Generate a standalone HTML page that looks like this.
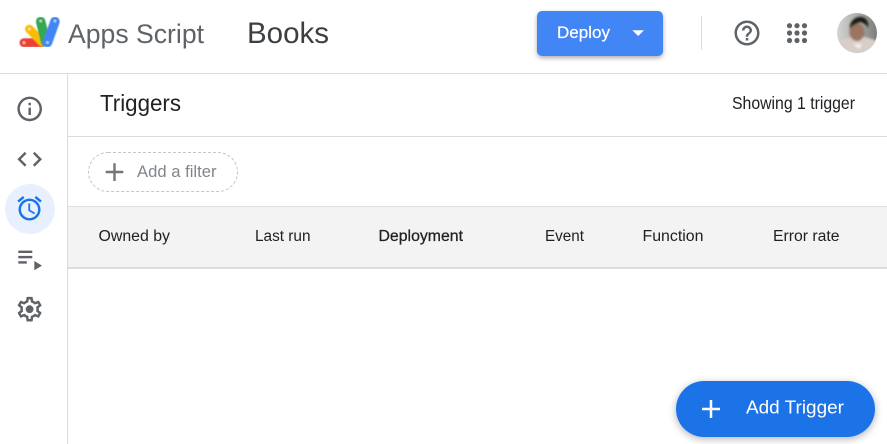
<!DOCTYPE html>
<html>
<head>
<meta charset="utf-8">
<style>
html,body{margin:0;padding:0;background:#fff;width:887px;height:444px;overflow:hidden}
svg{display:block}
text{font-family:"Liberation Sans",sans-serif}
</style>
</head>
<body>
<svg width="887" height="444" viewBox="0 0 887 444" xmlns="http://www.w3.org/2000/svg">
<defs>
<filter id="s1" x="-20%" y="-30%" width="140%" height="170%"><feDropShadow dx="0" dy="2" stdDeviation="2.5" flood-color="#000" flood-opacity=".33"/></filter>
<filter id="s2" x="-20%" y="-30%" width="140%" height="170%"><feDropShadow dx="0" dy="2" stdDeviation="4" flood-color="#000" flood-opacity=".3"/></filter>
<filter id="b1"><feGaussianBlur stdDeviation="1"/></filter>
<filter id="b2" x="-10%" y="-10%" width="120%" height="120%"><feGaussianBlur stdDeviation=".45"/></filter>
<clipPath id="av"><circle cx="857" cy="33" r="20"/></clipPath>
<linearGradient id="avg" x1="0" y1="0" x2="1" y2="0"><stop offset="0" stop-color="#d4d4d2"/><stop offset=".6" stop-color="#a5a5a3"/><stop offset="1" stop-color="#7c7c7c"/></linearGradient>
</defs>
<rect width="887" height="444" fill="#fff"/>

<!-- logo -->
<g stroke-linecap="round" fill="none" filter="url(#b2)">
<path d="M24 42.7H42" stroke="#ea4335" stroke-width="9"/>
<path d="M29.3 29L42 42" stroke="#fbbc04" stroke-width="8.5"/>
<path d="M40.7 21.5L45.5 42" stroke="#34a853" stroke-width="9.5"/>
<path d="M55 21.5L47.5 42.5" stroke="#4285f4" stroke-width="9.5"/>
<g fill="#fff" stroke="none" opacity=".65">
<circle cx="24" cy="42.7" r="1.4"/><circle cx="29.3" cy="29" r="1.4"/><circle cx="40.7" cy="21" r="1.4"/><circle cx="55" cy="21" r="1.4"/><circle cx="47.5" cy="42.5" r="1.4"/>
</g>
</g>
<text x="68" y="43" font-size="27" fill="#5f6368" textLength="136" lengthAdjust="spacingAndGlyphs">Apps Script</text>
<text x="247" y="43" font-size="29.5" fill="#3c4043" textLength="82" lengthAdjust="spacingAndGlyphs">Books</text>

<!-- deploy -->
<rect x="537" y="11" width="126" height="45" rx="5" fill="#4285f4" filter="url(#s1)"/>
<text x="557" y="38" font-size="16.5" fill="#fff" stroke="#fff" stroke-width=".2" textLength="53" lengthAdjust="spacingAndGlyphs">Deploy</text>
<path d="M632.3 30.3H644L638.2 36Z" fill="#fff"/>
<rect x="701" y="16" width="1" height="34" fill="#dadce0"/>

<!-- help -->
<path transform="translate(732 18) scale(1.25)" fill="#5f6368" d="M11 18h2v-2h-2v2zm1-16C6.48 2 2 6.48 2 12s4.48 10 10 10 10-4.48 10-10S17.52 2 12 2zm0 18c-4.41 0-8-3.59-8-8s3.59-8 8-8 8 3.59 8 8-3.59 8-8 8zm0-14c-2.21 0-4 1.79-4 4h2c0-1.1.9-2 2-2s2 .9 2 2c0 2-3 1.75-3 5h2c0-2.25 3-2.5 3-5 0-2.21-1.79-4-4-4z"/>

<!-- apps grid -->
<g fill="#5f6368">
<circle cx="789.5" cy="25.7" r="2.6"/><circle cx="797" cy="25.7" r="2.6"/><circle cx="804.5" cy="25.7" r="2.6"/>
<circle cx="789.5" cy="33" r="2.6"/><circle cx="797" cy="33" r="2.6"/><circle cx="804.5" cy="33" r="2.6"/>
<circle cx="789.5" cy="40.5" r="2.6"/><circle cx="797" cy="40.5" r="2.6"/><circle cx="804.5" cy="40.5" r="2.6"/>
</g>

<!-- avatar -->
<g clip-path="url(#av)">
<rect x="837" y="13" width="40" height="40" fill="url(#avg)"/>
<g filter="url(#b1)">
<path d="M836 54V42c6-3 12-4 16-5l12 0c4 1 10 2 14 5V54Z" fill="#d8cec8"/>
<ellipse cx="857" cy="32" rx="7.5" ry="9" fill="#9a7462"/>
<path d="M850 29c-1-8 6-13 12-12 5 1 7 6 6 11-1-3-4-5-8-6-3 2-8 3-10 7Z" fill="#1e1a18"/>
<path d="M853 44l9 0-3 5Z" fill="#f5f2ee"/>
</g>
</g>

<!-- layout lines -->
<rect x="0" y="73" width="887" height="1" fill="#dadce0"/>
<rect x="67" y="74" width="1" height="370" fill="#dadce0"/>
<rect x="68" y="136" width="819" height="1" fill="#dadce0"/>

<!-- sidebar: info -->
<path transform="translate(14.94 94.14) scale(1.23)" fill="#5f6368" d="M11 7h2v2h-2zm0 4h2v6h-2zm1-9C6.48 2 2 6.48 2 12s4.48 10 10 10 10-4.48 10-10S17.52 2 12 2zm0 18c-4.41 0-8-3.59-8-8s3.59-8 8-8 8 3.59 8 8-3.59 8-8 8z"/>
<!-- code -->
<path transform="translate(14.94 144.5) scale(1.23)" fill="#5f6368" d="M9.4 16.6L4.8 12l4.6-4.6L8 6l-6 6 6 6 1.4-1.4zm5.2 0l4.6-4.6-4.6-4.6L16 6l6 6-6 6-1.4-1.4z"/>
<!-- active -->
<circle cx="30" cy="209" r="25" fill="#e8f0fe"/>
<path transform="translate(14.9 193.7) scale(1.22)" fill="#1a73e8" d="M22 5.72l-4.6-3.86-1.29 1.53 4.6 3.86L22 5.72zM7.88 3.39L6.6 1.86 2 5.71l1.29 1.53 4.59-3.85zM12.5 8H11v6l4.75 2.85.75-1.23-4-2.37V8zM12 4c-4.97 0-9 4.03-9 9s4.03 9 9 9c4.97 0 9-4.03 9-9s-4.03-9-9-9zm0 16c-3.87 0-7-3.13-7-7s3.13-7 7-7 7 3.13 7 7-3.13 7-7 7z"/>
<!-- execution list -->
<rect x="18.3" y="250.6" width="14" height="2.4" fill="#5f6368"/>
<rect x="18.3" y="255.9" width="14" height="2.4" fill="#5f6368"/>
<rect x="18.3" y="261.2" width="8.5" height="2.4" fill="#5f6368"/>
<path d="M34.3 261V270.3L42 265.6Z" fill="#5f6368"/>
<!-- gear -->
<path transform="translate(14.84 294.4) scale(1.23)" fill="#5f6368" d="M19.43 12.98c.04-.32.07-.64.07-.98 0-.34-.03-.66-.07-.98l2.11-1.65c.19-.15.24-.42.12-.64l-2-3.46c-.09-.16-.26-.25-.44-.25-.06 0-.12.01-.17.03l-2.49 1c-.52-.4-1.08-.73-1.69-.98l-.38-2.65C14.46 2.18 14.25 2 14 2h-4c-.25 0-.46.18-.49.42l-.38 2.65c-.61.25-1.17.59-1.69.98l-2.49-1c-.06-.02-.12-.03-.18-.03-.17 0-.34.09-.43.25l-2 3.46c-.13.22-.07.49.12.64l2.11 1.65c-.04.32-.07.65-.07.98 0 .33.03.66.07.98l-2.11 1.65c-.19.15-.24.42-.12.64l2 3.46c.09.16.26.25.44.25.06 0 .12-.01.17-.03l2.49-1c.52.4 1.08.73 1.69.98l.38 2.65c.03.24.24.42.49.42h4c.25 0 .46-.18.49-.42l.38-2.65c.61-.25 1.17-.59 1.69-.98l2.49 1c.06.02.12.03.18.03.17 0 .34-.09.43-.25l2-3.46c.12-.22.07-.49-.12-.64l-2.11-1.65zm-1.98-1.71c.04.31.05.52.05.73 0 .21-.02.43-.05.73l-.14 1.13.89.7 1.08.84-.7 1.21-1.27-.51-1.04-.42-.9.68c-.43.32-.84.56-1.25.73l-1.06.43-.16 1.13-.2 1.35h-1.4l-.19-1.35-.16-1.13-1.06-.43c-.43-.18-.83-.41-1.23-.71l-.91-.7-1.06.43-1.27.51-.7-1.21 1.08-.84.89-.7-.14-1.13c-.03-.31-.05-.54-.05-.74s.02-.43.05-.73l.14-1.13-.89-.7-1.08-.84.7-1.21 1.27.51 1.04.42.9-.68c.43-.32.84-.56 1.25-.73l1.06-.43.16-1.13.2-1.35h1.39l.19 1.35.16 1.13 1.06.43c.43.18.83.41 1.23.71l.91.7 1.06-.43 1.27-.51.7 1.21-1.07.85-.89.7.14 1.13z"/>
<circle cx="29.6" cy="309.2" r="3.9" fill="#5f6368"/>

<!-- title row -->
<text x="100" y="111" font-size="23" fill="#202124" textLength="81" lengthAdjust="spacingAndGlyphs">Triggers</text>
<text x="732" y="109" font-size="17.5" fill="#202124" textLength="123" lengthAdjust="spacingAndGlyphs">Showing 1 trigger</text>

<!-- filter -->
<rect x="88.5" y="152.5" width="149" height="39" rx="19.5" fill="#fff" stroke="#c4c7ca" stroke-dasharray="3 2"/>
<path d="M105.7 172H123.3M114.5 163.3V181" stroke="#757575" stroke-width="2.4" fill="none"/>
<text x="137" y="177" font-size="16.5" fill="#80868b" textLength="79.5" lengthAdjust="spacingAndGlyphs">Add a filter</text>

<!-- table header -->
<rect x="68" y="206" width="819" height="62" fill="#f3f3f3"/>
<rect x="68" y="206" width="819" height="1" fill="#e0e0e0"/>
<rect x="68" y="267" width="819" height="2" fill="#dadce0"/>
<g font-size="15.5" fill="#202124">
<text x="98.5" y="241" textLength="71.5" lengthAdjust="spacingAndGlyphs">Owned by</text>
<text x="255" y="241" textLength="55.5" lengthAdjust="spacingAndGlyphs">Last run</text>
<text x="378.5" y="241" textLength="84.5" lengthAdjust="spacingAndGlyphs" stroke="#202124" stroke-width=".25">Deployment</text>
<text x="545" y="241" textLength="39" lengthAdjust="spacingAndGlyphs">Event</text>
<text x="642.5" y="241" textLength="61" lengthAdjust="spacingAndGlyphs">Function</text>
<text x="773" y="241" textLength="66.5" lengthAdjust="spacingAndGlyphs">Error rate</text>
</g>

<!-- FAB -->
<rect x="676" y="381" width="199" height="56" rx="28" fill="#1a73e8" filter="url(#s2)"/>
<path d="M702 409H720M711 400V418" stroke="#fff" stroke-width="2.5" fill="none"/>
<text x="746" y="413.5" font-size="18" fill="#fff" textLength="98" lengthAdjust="spacingAndGlyphs">Add Trigger</text>
</svg>
</body>
</html>
